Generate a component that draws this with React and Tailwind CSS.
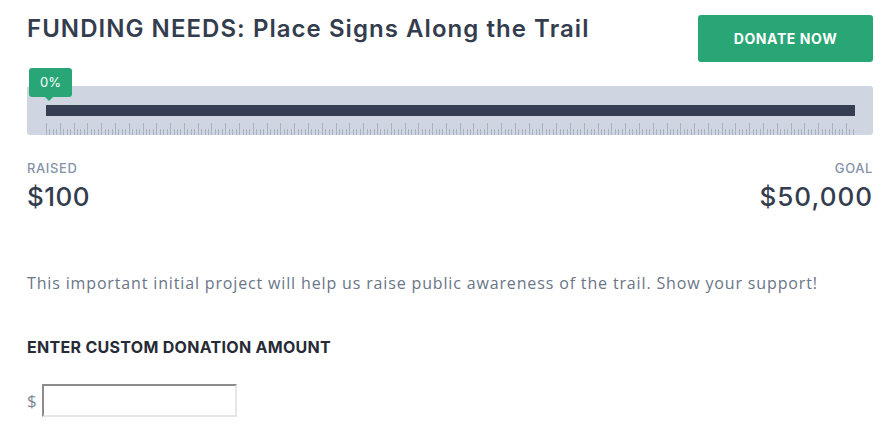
import React from "react";

function Ticks() {
  const n = 235;
  const step = 806.7 / 234;
  const lines = [];
  for (let i = 0; i < n; i++) {
    const x = Math.round(i * step) + 0.5;
    const long = i % 4 === 0;
    lines.push(
      <line key={i} x1={x} x2={x} y1={long ? 0 : 6} y2={12} stroke="#a9b2c2" strokeWidth="1" />
    );
  }
  return (
    <svg width="809" height="12" className="block">
      {lines}
    </svg>
  );
}

export default function App() {
  const head = { fontFamily: "Inter, 'DejaVu Sans', sans-serif" };
  const body = { fontFamily: "'Open Sans', 'Noto Sans', sans-serif" };
  return (
    <div className="w-[887px] h-[438px] bg-white px-[27px] pt-[15px] overflow-hidden" style={head}>
      <div className="flex items-start justify-between w-[846px]">
        <h1 className="text-[24px] leading-[28px] font-semibold text-[#343d4e] tracking-[1.05px]">
          FUNDING NEEDS: Place Signs Along the Trail
        </h1>
        <button className="w-[175px] h-[47px] rounded-[3px] bg-[#28a676] text-white text-[14px] font-bold tracking-[0.6px]">
          DONATE NOW
        </button>
      </div>

      <div className="relative mt-[24px] w-[846px] h-[49px] rounded-[3px] bg-[#cfd6e2] pt-[19px] pl-[19px]">
        <div className="absolute left-[2px] top-[-18px] w-[43px] h-[29px] rounded-[3px] bg-[#28a676] flex items-center justify-center text-white text-[13px]">
          0%
          <span className="absolute left-[16px] bottom-[-4px] w-0 h-0 border-l-[4px] border-r-[4px] border-t-[4px] border-l-transparent border-r-transparent border-t-[#28a676]" />
        </div>
        <div className="w-[809px] h-[11px] bg-[#363f51]" />
        <div className="mt-[7px]">
          <Ticks />
        </div>
      </div>

      <div className="flex justify-between w-[846px] mt-[25px]">
        <div>
          <div className="text-[13px] leading-[16px] text-[#8592a7] font-medium tracking-[0.6px]">RAISED</div>
          <div className="text-[26px] leading-[30px] text-[#343d4e] font-medium mt-[6px] tracking-[0.5px]">$100</div>
        </div>
        <div className="text-right">
          <div className="text-[13px] leading-[16px] text-[#8592a7] font-medium tracking-[0.6px]">GOAL</div>
          <div className="text-[26px] leading-[30px] text-[#343d4e] font-medium mt-[6px] tracking-[1px]">$50,000</div>
        </div>
      </div>

      <p className="mt-[60px] text-[16px] leading-[22px] text-[#6a7587] tracking-[0.85px]" style={body}>
        This important initial project will help us raise public awareness of the trail. Show your support!
      </p>

      <div className="mt-[43px] text-[16px] leading-[20px] font-bold text-[#262b36] tracking-[0.3px]">
        ENTER CUSTOM DONATION AMOUNT
      </div>

      <div className="mt-[27px] flex items-center">
        <span className="text-[17px] text-[#7a8596] w-[15px]" style={body}>$</span>
        <input
          type="text"
          className="w-[195px] h-[33px] border-2 border-t-[#8c8c8c] border-l-[#8c8c8c] border-r-[#e6e6e6] border-b-[#e6e6e6] bg-white outline-none"
        />
      </div>
    </div>
  );
}
